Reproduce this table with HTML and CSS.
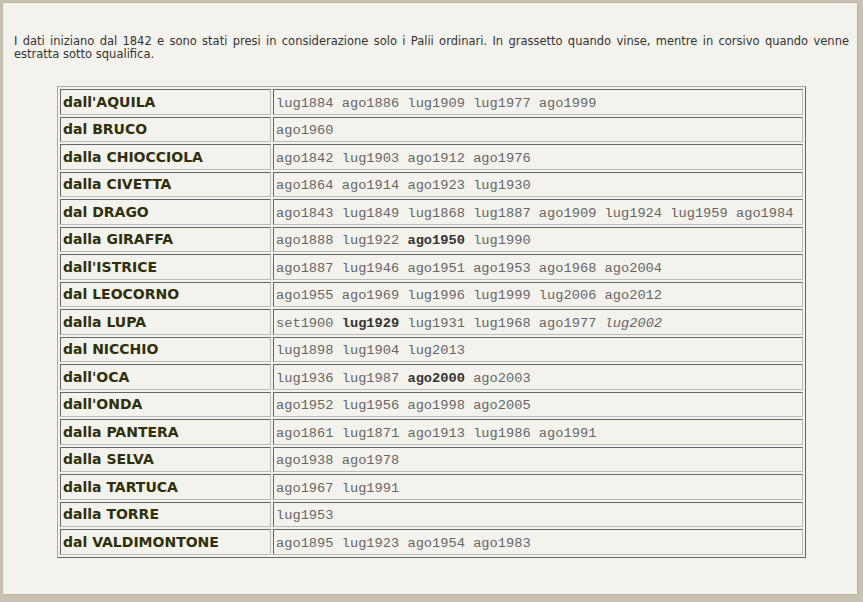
FILE: index.html
```html
<!DOCTYPE html>
<html lang="it">
<head>
<meta charset="utf-8">
<title>Palii</title>
<link rel="stylesheet" href="styles.css">
</head>
<body>
<div class="page">
  <p class="intro">I dati iniziano dal 1842 e sono stati presi in considerazione solo i Palii ordinari. In grassetto quando vinse, mentre in corsivo quando venne estratta sotto squalifica.</p>
  <table class="palii">
    <tr><td class="name">dall'AQUILA</td><td class="data">lug1884 ago1886 lug1909 lug1977 ago1999</td></tr>
    <tr><td class="name">dal BRUCO</td><td class="data">ago1960</td></tr>
    <tr><td class="name">dalla CHIOCCIOLA</td><td class="data">ago1842 lug1903 ago1912 ago1976</td></tr>
    <tr><td class="name">dalla CIVETTA</td><td class="data">ago1864 ago1914 ago1923 lug1930</td></tr>
    <tr><td class="name">dal DRAGO</td><td class="data">ago1843 lug1849 lug1868 lug1887 ago1909 lug1924 lug1959 ago1984</td></tr>
    <tr><td class="name">dalla GIRAFFA</td><td class="data">ago1888 lug1922 <b>ago1950</b> lug1990</td></tr>
    <tr><td class="name">dall'ISTRICE</td><td class="data">ago1887 lug1946 ago1951 ago1953 ago1968 ago2004</td></tr>
    <tr><td class="name">dal LEOCORNO</td><td class="data">ago1955 ago1969 lug1996 lug1999 lug2006 ago2012</td></tr>
    <tr><td class="name">dalla LUPA</td><td class="data">set1900 <b>lug1929</b> lug1931 lug1968 ago1977 <i>lug2002</i></td></tr>
    <tr><td class="name">dal NICCHIO</td><td class="data">lug1898 lug1904 lug2013</td></tr>
    <tr><td class="name">dall'OCA</td><td class="data">lug1936 lug1987 <b>ago2000</b> ago2003</td></tr>
    <tr><td class="name">dall'ONDA</td><td class="data">ago1952 lug1956 ago1998 ago2005</td></tr>
    <tr><td class="name">dalla PANTERA</td><td class="data">ago1861 lug1871 ago1913 lug1986 ago1991</td></tr>
    <tr><td class="name">dalla SELVA</td><td class="data">ago1938 ago1978</td></tr>
    <tr><td class="name">dalla TARTUCA</td><td class="data">ago1967 lug1991</td></tr>
    <tr><td class="name">dalla TORRE</td><td class="data">lug1953</td></tr>
    <tr><td class="name">dal VALDIMONTONE</td><td class="data">ago1895 lug1923 ago1954 ago1983</td></tr>
  </table>
</div>
</body>
</html>
```

FILE: styles.css
```css
html, body {
  margin: 0;
  padding: 0;
}
body {
  background: #c8c2b2;
  width: 863px;
  height: 602px;
  overflow: hidden;
}
.page {
  margin: 3px 6px 0 3px;
  height: 591px;
  background: #f3f2ec;
  padding: 32px 8px 0 11px;
  box-sizing: border-box;
  box-shadow: 0 0 2px rgba(120,110,90,0.4);
}
.intro {
  margin: 0;
  font-family: "DejaVu Sans", Verdana, sans-serif;
  font-size: 11.5px;
  line-height: 13px;
  color: #333;
  text-align: justify;
}
.palii {
  margin: 25px auto 0;
  width: 749px;
  border: 1px solid #888;
  border-color: #aaa #666 #666 #aaa;
  border-spacing: 2px;
}
.palii td {
  border: 1px solid #888;
  border-color: #666 #bbb #bbb #666;
  height: 25.5px;
  box-sizing: border-box;
  padding: 0 2px;
  vertical-align: middle;
}
.name {
  width: 211px;
  font-family: "DejaVu Sans", Verdana, sans-serif;
  font-weight: bold;
  font-size: 14px;
  color: #2f2f0a;
}
.data {
  font-family: "Liberation Mono", "Courier New", monospace;
  font-size: 13.7px;
  color: #666;
  padding-top: 3px !important;
}
.data b {
  color: #333;
}
.data i {
  color: #666;
}
```
